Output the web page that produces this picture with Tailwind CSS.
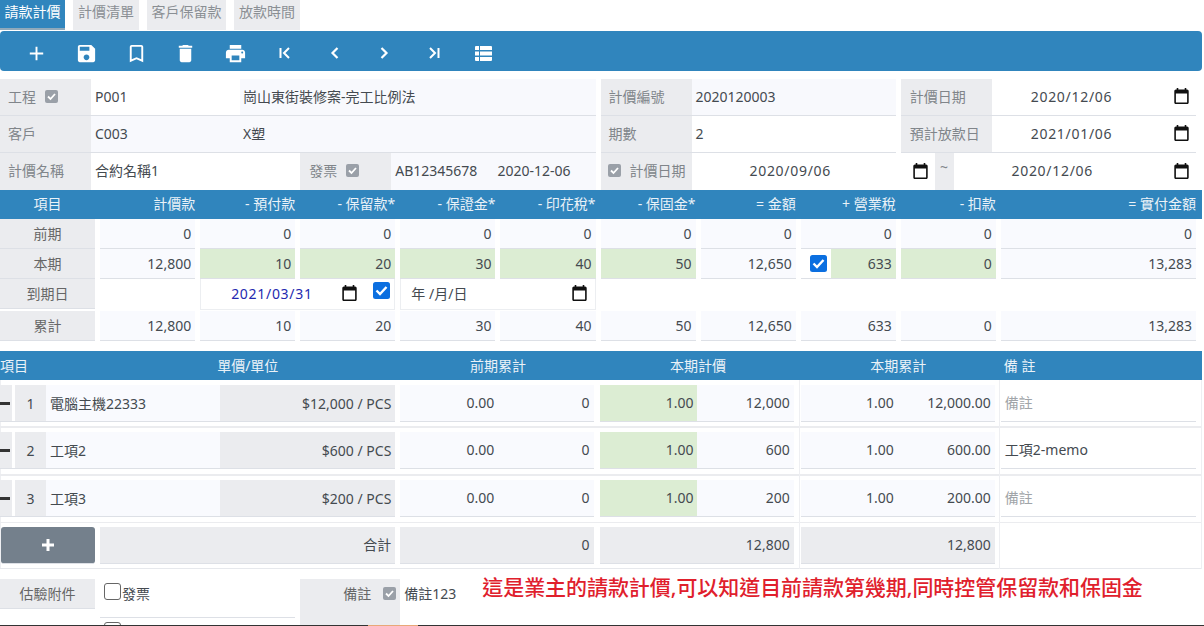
<!DOCTYPE html>
<html lang="zh-Hant">
<head>
  <meta charset="UTF-8" />
  <title>請款計價</title>
  <script src="https://cdn.jsdelivr.net/npm/@tailwindcss/browser@4"></script>
</head>
<body class="bg-white font-['Noto_Sans','Noto_Sans_CJK_TC',sans-serif] text-[14px] text-[#444a50]">
<div class="flex flex-col h-[626px] w-[1204px] overflow-hidden">
<div class="flex-1 min-h-0 overflow-hidden w-[1202px]">

  <!-- tabs -->
  <div class="flex gap-[8px] h-[31px] items-start">
    <div class="h-[30px] w-[65px] bg-[#3085bd] text-white text-center leading-[24px] border-b-2 border-[#8fa9bb]">請款計價</div>
    <div class="h-[30px] w-[66px] bg-[#ebecef] text-[#8a8f94] text-center leading-[24px]">計價清單</div>
    <div class="h-[30px] w-[79px] bg-[#ebecef] text-[#8a8f94] text-center leading-[24px]">客戶保留款</div>
    <div class="h-[30px] w-[66px] bg-[#ebecef] text-[#8a8f94] text-center leading-[24px]">放款時間</div>
  </div>

  <!-- toolbar -->
  <div class="flex items-center h-[40px] pt-[4px] pl-[12px] bg-[#3085bd] rounded-[4px] text-white">
    <div class="w-[49.67px] flex justify-center"><svg class="w-[23px] h-[23px]" viewBox="0 0 24 24" fill="currentColor"><path d="M19 13h-6v6h-2v-6H5v-2h6V5h2v6h6v2z"/></svg></div>
    <div class="w-[49.67px] flex justify-center"><svg class="w-[23px] h-[23px]" viewBox="0 0 24 24" fill="currentColor"><path d="M17 3H5c-1.11 0-2 .9-2 2v14c0 1.1.89 2 2 2h14c1.1 0 2-.9 2-2V7l-4-4zm-5 16c-1.66 0-3-1.34-3-3s1.34-3 3-3 3 1.34 3 3-1.34 3-3 3zm3-10H5V5h10v4z"/></svg></div>
    <div class="w-[49.67px] flex justify-center"><svg class="w-[23px] h-[23px]" viewBox="0 0 24 24" fill="currentColor"><path d="M17 3H7c-1.1 0-1.99.9-1.99 2L5 21l7-3 7 3V5c0-1.1-.9-2-2-2zm0 15l-5-2.18L7 18V5h10v13z"/></svg></div>
    <div class="w-[49.67px] flex justify-center"><svg class="w-[23px] h-[23px]" viewBox="0 0 24 24" fill="currentColor"><path d="M6 19c0 1.1.9 2 2 2h8c1.1 0 2-.9 2-2V7H6v12zM19 4h-3.5l-1-1h-5l-1 1H5v2h14V4z"/></svg></div>
    <div class="w-[49.67px] flex justify-center"><svg class="w-[23px] h-[23px]" viewBox="0 0 24 24" fill="currentColor"><path d="M19 8H5c-1.66 0-3 1.34-3 3v6h4v4h12v-4h4v-6c0-1.66-1.34-3-3-3zm-3 11H8v-5h8v5zm3-7c-.55 0-1-.45-1-1s.45-1 1-1 1 .45 1 1-.45 1-1 1zm-1-9H6v4h12V3z"/></svg></div>
    <div class="w-[49.67px] flex justify-center"><svg class="w-[14px] h-[14px]" viewBox="0 0 14 14" fill="none" stroke="currentColor" stroke-width="2"><path d="M2.5 2v10M11 2L6 7l5 5"/></svg></div>
    <div class="w-[49.67px] flex justify-center"><svg class="w-[14px] h-[14px]" viewBox="0 0 14 14" fill="none" stroke="currentColor" stroke-width="2.2"><path d="M9.5 2L4.5 7l5 5"/></svg></div>
    <div class="w-[49.67px] flex justify-center"><svg class="w-[14px] h-[14px]" viewBox="0 0 14 14" fill="none" stroke="currentColor" stroke-width="2.2"><path d="M4.5 2l5 5-5 5"/></svg></div>
    <div class="w-[49.67px] flex justify-center"><svg class="w-[14px] h-[14px]" viewBox="0 0 14 14" fill="none" stroke="currentColor" stroke-width="2"><path d="M3 2l5 5-5 5M11.5 2v10"/></svg></div>
    <div class="w-[49.67px] flex justify-center"><svg class="w-[17px] h-[15px]" viewBox="0 0 17 15" fill="currentColor"><path d="M0 1a1 1 0 0 1 1-1h3v4H0zM5 0h11a1 1 0 0 1 1 1v3H5zM0 5.5h4v4H0zM5 5.5h12v4H5zM0 11h4v4H1a1 1 0 0 1-1-1zM5 11h12v3a1 1 0 0 1-1 1H5z"/></svg></div>
  </div>

  <!-- form -->
  <div class="pt-[8px] pr-[6px]">
    <div class="grid grid-cols-12 gap-x-[5px] h-[37px]">
      <div class="col-span-6 flex border-b border-[#dde0e6]">
        <div class="w-[91px] bg-[#ebecef] text-[#80858a] flex items-center pb-[2px] pl-[8px]">工程<svg class="ml-[9px] w-[13px] h-[13px]" viewBox="0 0 13 13"><rect width="13" height="13" rx="2" fill="#9aa0a8"/><path d="M3 6.5l2.5 2.5L10 4" fill="none" stroke="#fff" stroke-width="1.8"/></svg></div>
        <div class="w-[149px] bg-white flex items-center pb-[2px] pl-[4px]">P001</div>
        <div class="flex-1 bg-[#f8f9fd] flex items-center pb-[2px] pl-[3px]">崗山東街裝修案-完工比例法</div>
      </div>
      <div class="col-span-3 flex border-b border-[#dde0e6]">
        <div class="w-[91px] bg-[#ebecef] text-[#80858a] flex items-center pb-[2px] pl-[8px]">計價編號</div>
        <div class="flex-1 bg-[#f8f9fd] flex items-center pb-[2px] pl-[4px]">2020120003</div>
      </div>
      <div class="col-span-3 flex border-b border-[#dde0e6]">
        <div class="w-[91px] bg-[#ebecef] text-[#80858a] flex items-center pb-[2px] pl-[9px]">計價日期</div>
        <div class="flex-1 bg-white flex items-center pb-[2px] pl-[39px] pr-[7px] justify-between"><span class="tracking-[0.7px]">2020/12/06</span><svg class="w-[15px] h-[16px]" viewBox="3 2 18 20" fill="#111"><path d="M19 4h-1V2h-2v2H8V2H6v2H5c-1.1 0-2 .9-2 2v14c0 1.1.9 2 2 2h14c1.1 0 2-.9 2-2V6c0-1.1-.9-2-2-2zm0 16H5V9h14v11z"/></svg></div>
      </div>
    </div>
    <div class="grid grid-cols-12 gap-x-[5px] h-[37px]">
      <div class="col-span-6 flex border-b border-[#dde0e6]">
        <div class="w-[91px] bg-[#ebecef] text-[#80858a] flex items-center pb-[2px] pl-[8px]">客戶</div>
        <div class="w-[149px] bg-[#f8f9fd] flex items-center pb-[2px] pl-[4px]">C003</div>
        <div class="flex-1 bg-[#f8f9fd] flex items-center pb-[2px] pl-[3px]">X塑</div>
      </div>
      <div class="col-span-3 flex border-b border-[#dde0e6]">
        <div class="w-[91px] bg-[#ebecef] text-[#80858a] flex items-center pb-[2px] pl-[8px]">期數</div>
        <div class="flex-1 bg-white flex items-center pb-[2px] pl-[4px]">2</div>
      </div>
      <div class="col-span-3 flex border-b border-[#dde0e6]">
        <div class="w-[91px] bg-[#ebecef] text-[#80858a] flex items-center pb-[2px] pl-[9px]">預計放款日</div>
        <div class="flex-1 bg-white flex items-center pb-[2px] pl-[39px] pr-[7px] justify-between"><span class="tracking-[0.7px]">2021/01/06</span><svg class="w-[15px] h-[16px]" viewBox="3 2 18 20" fill="#111"><path d="M19 4h-1V2h-2v2H8V2H6v2H5c-1.1 0-2 .9-2 2v14c0 1.1.9 2 2 2h14c1.1 0 2-.9 2-2V6c0-1.1-.9-2-2-2zm0 16H5V9h14v11z"/></svg></div>
      </div>
    </div>
    <div class="grid grid-cols-12 gap-x-[5px] h-[37px]">
      <div class="col-span-3 flex">
        <div class="w-[91px] bg-[#ebecef] text-[#80858a] flex items-center pb-[2px] pl-[8px]">計價名稱</div>
        <div class="flex-1 bg-white flex items-center pb-[2px] pl-[4px]">合約名稱1</div>
      </div>
      <div class="col-span-3 flex">
        <div class="w-[91px] bg-[#ebecef] text-[#80858a] flex items-center pb-[2px] pl-[9px]">發票<svg class="ml-[9px] w-[13px] h-[13px]" viewBox="0 0 13 13"><rect width="13" height="13" rx="2" fill="#9aa0a8"/><path d="M3 6.5l2.5 2.5L10 4" fill="none" stroke="#fff" stroke-width="1.8"/></svg></div>
        <div class="flex-1 bg-[#f8f9fd] flex items-center pb-[2px] pl-[4px] gap-[20px]"><span>AB12345678</span><span>2020-12-06</span></div>
      </div>
      <div class="col-span-6 flex">
        <div class="w-[91px] bg-[#ebecef] text-[#80858a] flex items-center pb-[2px] pl-[7px]"><svg class="mr-[9px] w-[13px] h-[13px]" viewBox="0 0 13 13"><rect width="13" height="13" rx="2" fill="#9aa0a8"/><path d="M3 6.5l2.5 2.5L10 4" fill="none" stroke="#fff" stroke-width="1.8"/></svg>計價日期</div>
        <div class="w-[243px] bg-white flex items-center pb-[2px] pl-[58px] pr-[7px] justify-between"><span class="tracking-[0.7px]">2020/09/06</span><svg class="w-[15px] h-[16px]" viewBox="3 2 18 20" fill="#111"><path d="M19 4h-1V2h-2v2H8V2H6v2H5c-1.1 0-2 .9-2 2v14c0 1.1.9 2 2 2h14c1.1 0 2-.9 2-2V6c0-1.1-.9-2-2-2zm0 16H5V9h14v11z"/></svg></div>
        <div class="w-[19px] bg-[#ebecef] text-[#80858a] text-center leading-[28px]">~</div>
        <div class="flex-1 bg-white flex items-center pb-[2px] pl-[58px] pr-[7px] justify-between"><span class="tracking-[0.7px]">2020/12/06</span><svg class="w-[15px] h-[16px]" viewBox="3 2 18 20" fill="#111"><path d="M19 4h-1V2h-2v2H8V2H6v2H5c-1.1 0-2 .9-2 2v14c0 1.1.9 2 2 2h14c1.1 0 2-.9 2-2V6c0-1.1-.9-2-2-2zm0 16H5V9h14v11z"/></svg></div>
      </div>
    </div>
  </div>

  <!-- summary table -->
  <div class="bg-[#3085bd] text-[#eaf2f8] pr-[6px] h-[29px]">
    <div class="grid grid-cols-12 gap-x-[5px] leading-[28px] text-right">
      <div class="text-center">項目</div><div>計價款</div><div>- 預付款</div><div>- 保留款*</div><div>- 保證金*</div><div>- 印花稅*</div><div>- 保固金*</div><div>= 金額</div><div>+ 營業稅</div><div>- 扣款</div><div class="col-span-2">= 實付金額</div>
    </div>
  </div>
  <div class="pr-[6px] text-right">
    <div class="grid grid-cols-12 gap-x-[5px] h-[30px] leading-[29px]">
      <div class="bg-[#ebecef] border-b border-[#dde0e6] text-center text-[#666]">前期</div>
      <div class="bg-[#f9fafe] border-b border-[#dde0e6] pr-[4px]">0</div>
      <div class="bg-[#f9fafe] border-b border-[#dde0e6] pr-[4px]">0</div>
      <div class="bg-[#f9fafe] border-b border-[#dde0e6] pr-[4px]">0</div>
      <div class="bg-[#f9fafe] border-b border-[#dde0e6] pr-[4px]">0</div>
      <div class="bg-[#f9fafe] border-b border-[#dde0e6] pr-[4px]">0</div>
      <div class="bg-[#f9fafe] border-b border-[#dde0e6] pr-[4px]">0</div>
      <div class="bg-[#f9fafe] border-b border-[#dde0e6] pr-[4px]">0</div>
      <div class="bg-[#f9fafe] border-b border-[#dde0e6] pr-[4px]">0</div>
      <div class="bg-[#f9fafe] border-b border-[#dde0e6] pr-[4px]">0</div>
      <div class="col-span-2 bg-[#f9fafe] border-b border-[#dde0e6] pr-[4px]">0</div>
    </div>
    <div class="grid grid-cols-12 gap-x-[5px] h-[30px] leading-[29px]">
      <div class="bg-[#ebecef] border-b border-[#dde0e6] text-center text-[#666]">本期</div>
      <div class="bg-[#f9fafe] border-b border-[#dde0e6] pr-[4px]">12,800</div>
      <div class="bg-[#dcedd3] border-b border-[#dde0e6] pr-[4px]">10</div>
      <div class="bg-[#dcedd3] border-b border-[#dde0e6] pr-[4px]">20</div>
      <div class="bg-[#dcedd3] border-b border-[#dde0e6] pr-[4px]">30</div>
      <div class="bg-[#dcedd3] border-b border-[#dde0e6] pr-[4px]">40</div>
      <div class="bg-[#dcedd3] border-b border-[#dde0e6] pr-[4px]">50</div>
      <div class="bg-[#f9fafe] border-b border-[#dde0e6] pr-[4px]">12,650</div>
      <div class="flex border-b border-[#dde0e6]">
        <div class="w-[30px] bg-white flex items-center pl-[9px]"><svg class="w-[17px] h-[17px]" viewBox="0 0 17 17"><rect width="17" height="17" rx="2.5" fill="#0b6fe0"/><path d="M3.5 8.5l3.5 3.5 6.5-7" fill="none" stroke="#fff" stroke-width="2.4"/></svg></div>
        <div class="flex-1 bg-[#dcedd3] pr-[4px]">633</div>
      </div>
      <div class="bg-[#dcedd3] border-b border-[#dde0e6] pr-[4px]">0</div>
      <div class="col-span-2 bg-[#f9fafe] border-b border-[#dde0e6] pr-[4px]">13,283</div>
    </div>
    <div class="grid grid-cols-12 gap-x-[5px] h-[32px]">
      <div class="h-[30px] bg-[#ebecef] border-b border-[#dde0e6] text-center text-[#666] leading-[29px]">到期日</div>
      <div></div>
      <div class="col-span-2 h-[31px] flex items-center bg-white border-x border-b border-[#eceef1] pl-[30px] pb-[2px]">
        <span class="text-[#2429b0] tracking-[0.7px]">2021/03/31</span>
        <svg class="ml-[29px] w-[15px] h-[16px]" viewBox="3 2 18 20" fill="#111"><path d="M19 4h-1V2h-2v2H8V2H6v2H5c-1.1 0-2 .9-2 2v14c0 1.1.9 2 2 2h14c1.1 0 2-.9 2-2V6c0-1.1-.9-2-2-2zm0 16H5V9h14v11z"/></svg>
        <svg class="ml-[16px] mb-[6px] w-[17px] h-[17px]" viewBox="0 0 17 17"><rect width="17" height="17" rx="2.5" fill="#0b6fe0"/><path d="M3.5 8.5l3.5 3.5 6.5-7" fill="none" stroke="#fff" stroke-width="2.4"/></svg>
      </div>
      <div class="col-span-2 h-[31px] flex items-center justify-between bg-white border-x border-b border-[#eceef1] pl-[10px] pr-[8px] pb-[2px]">
        <span>年 /月/日</span>
        <svg class="w-[15px] h-[16px]" viewBox="3 2 18 20" fill="#111"><path d="M19 4h-1V2h-2v2H8V2H6v2H5c-1.1 0-2 .9-2 2v14c0 1.1.9 2 2 2h14c1.1 0 2-.9 2-2V6c0-1.1-.9-2-2-2zm0 16H5V9h14v11z"/></svg>
      </div>
    </div>
    <div class="grid grid-cols-12 gap-x-[5px] h-[30px] leading-[29px]">
      <div class="bg-[#ebecef] border-b border-[#dde0e6] text-center text-[#666]">累計</div>
      <div class="bg-[#f9fafe] border-b border-[#dde0e6] pr-[4px]">12,800</div>
      <div class="bg-[#f9fafe] border-b border-[#dde0e6] pr-[4px]">10</div>
      <div class="bg-[#f9fafe] border-b border-[#dde0e6] pr-[4px]">20</div>
      <div class="bg-[#f9fafe] border-b border-[#dde0e6] pr-[4px]">30</div>
      <div class="bg-[#f9fafe] border-b border-[#dde0e6] pr-[4px]">40</div>
      <div class="bg-[#f9fafe] border-b border-[#dde0e6] pr-[4px]">50</div>
      <div class="bg-[#f9fafe] border-b border-[#dde0e6] pr-[4px]">12,650</div>
      <div class="bg-[#f9fafe] border-b border-[#dde0e6] pr-[4px]">633</div>
      <div class="bg-[#f9fafe] border-b border-[#dde0e6] pr-[4px]">0</div>
      <div class="col-span-2 bg-[#f9fafe] border-b border-[#dde0e6] pr-[4px]">13,283</div>
    </div>
  </div>

  <!-- items table -->
  <div class="mt-[10px] bg-[#3085bd] text-[#eaf2f8] pr-[6px] h-[29px]">
    <div class="grid grid-cols-12 gap-x-[5px] leading-[30px]">
      <div class="col-span-2">項目</div>
      <div class="col-span-2 pl-[17px]">單價/單位</div>
      <div class="col-span-2 text-center">前期累計</div>
      <div class="col-span-2 text-center">本期計價</div>
      <div class="col-span-2 text-center">本期累計</div>
      <div class="col-span-2 pl-[3px]">備 註</div>
    </div>
  </div>
  <div class="relative border-x border-[#eeeff2]">
    <div class="absolute top-0 bottom-0 left-[798px] w-px bg-[#eeeff2]"></div>
    <div class="absolute top-0 bottom-0 left-[998px] w-px bg-[#eeeff2]"></div>

    <div class="grid grid-cols-12 gap-x-[5px] pr-[5px] -ml-px pt-[5px] pb-[4px] h-[48px] border-b-2 border-[#ebecef]">
      <div class="col-span-4 flex h-[37px] border-b border-[#dde0e6]">
        <div class="w-[12px] bg-[#ebecef] flex items-center"><span class="w-[10px] h-[3px] bg-[#333]"></span></div>
        <div class="w-[31px] ml-[3px] bg-[#ebecef] flex items-center justify-center">1</div>
        <div class="w-[174px] bg-[#f9fafe] flex items-center pl-[4px]">電腦主機22333</div>
        <div class="flex-1 bg-[#ebecef] flex items-center justify-end pr-[4px]">$12,000 / PCS</div>
      </div>
      <div class="col-span-2 mr-[2px] grid grid-cols-[97px_1fr] h-[37px] bg-[#f9fafe] border-b border-[#dde0e6] text-right leading-[36px]"><div class="pr-[3px]">0.00</div><div class="pr-[4px]">0</div></div>
      <div class="col-span-2 mr-[2px] -ml-px grid grid-cols-[97px_1fr] h-[37px] bg-[#f9fafe] border-b border-[#dde0e6] text-right leading-[36px]"><div class="bg-[#dcedd3] pr-[3px]">1.00</div><div class="pr-[4px]">12,000</div></div>
      <div class="col-span-2 mr-[1px] grid grid-cols-[97px_1fr] h-[37px] bg-[#f9fafe] border-b border-[#dde0e6] text-right leading-[36px]"><div class="pr-[4px]">1.00</div><div class="pr-[4px]">12,000.00</div></div>
      <div class="col-span-2 h-[37px] bg-white border-b border-[#dde0e6] pl-[4px] text-[#a0a4a8] leading-[36px]">備註</div>
    </div>

    <div class="grid grid-cols-12 gap-x-[5px] pr-[5px] -ml-px pt-[4px] pb-[5px] h-[48px] border-b-2 border-[#ebecef]">
      <div class="col-span-4 flex h-[37px] border-b border-[#dde0e6]">
        <div class="w-[12px] bg-[#ebecef] flex items-center"><span class="w-[10px] h-[3px] bg-[#333]"></span></div>
        <div class="w-[31px] ml-[3px] bg-[#ebecef] flex items-center justify-center">2</div>
        <div class="w-[174px] bg-[#f9fafe] flex items-center pl-[4px]">工項2</div>
        <div class="flex-1 bg-[#ebecef] flex items-center justify-end pr-[4px]">$600 / PCS</div>
      </div>
      <div class="col-span-2 mr-[2px] grid grid-cols-[97px_1fr] h-[37px] bg-[#f9fafe] border-b border-[#dde0e6] text-right leading-[36px]"><div class="pr-[3px]">0.00</div><div class="pr-[4px]">0</div></div>
      <div class="col-span-2 mr-[2px] -ml-px grid grid-cols-[97px_1fr] h-[37px] bg-[#f9fafe] border-b border-[#dde0e6] text-right leading-[36px]"><div class="bg-[#dcedd3] pr-[3px]">1.00</div><div class="pr-[4px]">600</div></div>
      <div class="col-span-2 mr-[1px] grid grid-cols-[97px_1fr] h-[37px] bg-[#f9fafe] border-b border-[#dde0e6] text-right leading-[36px]"><div class="pr-[4px]">1.00</div><div class="pr-[4px]">600.00</div></div>
      <div class="col-span-2 h-[37px] bg-white border-b border-[#dde0e6] pl-[4px] leading-[36px]">工項2-memo</div>
    </div>

    <div class="grid grid-cols-12 gap-x-[5px] pr-[5px] -ml-px pt-[4px] pb-[5px] h-[47px] border-b border-[#ebecef]">
      <div class="col-span-4 flex h-[37px] border-b border-[#dde0e6]">
        <div class="w-[12px] bg-[#ebecef] flex items-center"><span class="w-[10px] h-[3px] bg-[#333]"></span></div>
        <div class="w-[31px] ml-[3px] bg-[#ebecef] flex items-center justify-center">3</div>
        <div class="w-[174px] bg-[#f9fafe] flex items-center pl-[4px]">工項3</div>
        <div class="flex-1 bg-[#ebecef] flex items-center justify-end pr-[4px]">$200 / PCS</div>
      </div>
      <div class="col-span-2 mr-[2px] grid grid-cols-[97px_1fr] h-[37px] bg-[#f9fafe] border-b border-[#dde0e6] text-right leading-[36px]"><div class="pr-[3px]">0.00</div><div class="pr-[4px]">0</div></div>
      <div class="col-span-2 mr-[2px] -ml-px grid grid-cols-[97px_1fr] h-[37px] bg-[#f9fafe] border-b border-[#dde0e6] text-right leading-[36px]"><div class="bg-[#dcedd3] pr-[3px]">1.00</div><div class="pr-[4px]">200</div></div>
      <div class="col-span-2 mr-[1px] grid grid-cols-[97px_1fr] h-[37px] bg-[#f9fafe] border-b border-[#dde0e6] text-right leading-[36px]"><div class="pr-[4px]">1.00</div><div class="pr-[4px]">200.00</div></div>
      <div class="col-span-2 h-[37px] bg-white border-b border-[#dde0e6] pl-[4px] text-[#a0a4a8] leading-[36px]">備註</div>
    </div>

    <div class="grid grid-cols-12 gap-x-[5px] pr-[5px] -ml-px pt-[4px] pb-[4px] h-[46px] border-b border-[#e6e8ec]">
      <div class="h-[37px] ml-px bg-[#74808c] rounded-[3px] border-b border-[#dde0e6] text-white flex items-center justify-center"><svg class="w-[16px] h-[16px]" viewBox="0 0 16 16" fill="currentColor"><path d="M6.5 2h3v4.5H14v3H9.5V14h-3V9.5H2v-3h4.5z"/></svg></div>
      <div class="col-span-3 h-[37px] bg-[#ebecef] border-b border-[#dde0e6] text-right pr-[4px] leading-[36px]">合計</div>
      <div class="col-span-2 mr-[2px] h-[37px] bg-[#ebecef] border-b border-[#dde0e6] text-right pr-[4px] leading-[36px]">0</div>
      <div class="col-span-2 mr-[2px] -ml-px h-[37px] bg-[#ebecef] border-b border-[#dde0e6] text-right pr-[4px] leading-[36px]">12,800</div>
      <div class="col-span-2 mr-[1px] h-[37px] bg-[#ebecef] border-b border-[#dde0e6] text-right pr-[4px] leading-[36px]">12,800</div>
    </div>
  </div>

  <!-- attachments and remark -->
  <div class="grid grid-cols-12 gap-x-[5px] pr-[6px] pt-[10px]">
    <div class="h-[30px] bg-[#ebecef] border-b border-[#dde0e6] text-center leading-[29px] text-[#666]">估驗附件</div>
    <div class="col-span-2">
      <div class="flex items-end h-[39px] pl-[4px] pb-[17px] border-b border-[#dde0e6]"><span class="w-[17px] h-[17px] bg-white border border-[#666] rounded-[3px]"></span><span class="ml-[1px] -mb-[2px] leading-[17px]">發票</span></div>
      <div class="pl-[4px] pt-[4px]"><span class="block w-[17px] h-[17px] bg-white border border-[#666] rounded-[3px]"></span></div>
    </div>
    <div class="col-span-9 flex">
      <div class="w-[100px] h-[60px] bg-[#ebecef] text-[#666] flex items-start justify-end pt-[6px] pr-[4px] leading-[18px]">備註<svg class="ml-[12px] mt-[2px] w-[13px] h-[13px]" viewBox="0 0 13 13"><rect width="13" height="13" rx="2" fill="#9aa0a8"/><path d="M3 6.5l2.5 2.5L10 4" fill="none" stroke="#fff" stroke-width="1.8"/></svg></div>
      <div class="pl-[4px] pt-[6px] leading-[18px]">備註123</div>
      <div class="pl-[26px] -mt-[4px] text-[21px] tracking-[-0.06px] font-medium text-[#e0202c] leading-[24px] whitespace-nowrap">這是業主的請款計價,可以知道目前請款第幾期,同時控管保留款和保固金</div>
    </div>
  </div>
</div>

<!-- window edge -->
<div class="h-px bg-[#333] flex pl-[368px]"><span class="w-[50px] bg-[#e8a878]"></span></div>
</div>
</body>
</html>
